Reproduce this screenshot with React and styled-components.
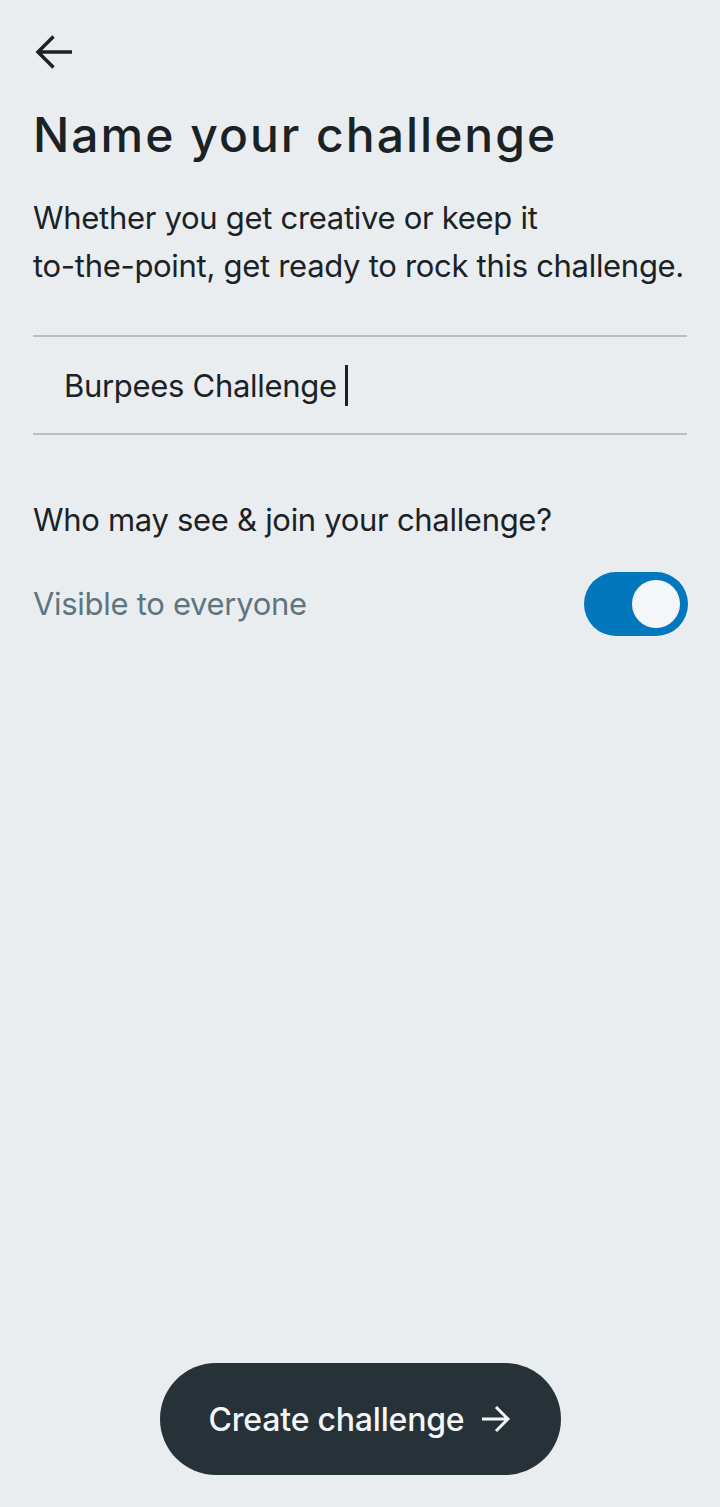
import React from "react";
import styled, { createGlobalStyle } from "styled-components";

const Global = createGlobalStyle`
  html, body { margin: 0; padding: 0; background: #e9edf0; }
  body { font-family: Inter, "Noto Sans", sans-serif; -webkit-font-smoothing: antialiased; }
  * { box-sizing: border-box; }
`;

const Page = styled.div`
  width: 720px;
  min-height: 1507px;
  display: flex;
  flex-direction: column;
  padding: 0 33px 32px 33px;
  background: #e9edf0;
  color: #1b2226;
`;

const BackButton = styled.button`
  display: flex;
  align-items: center;
  justify-content: center;
  width: 48px;
  height: 48px;
  margin: 28px 0 0 -2px;
  padding: 0;
  border: none;
  background: transparent;
  cursor: pointer;
`;

const Title = styled.h1`
  margin: 30px 0 0 0;
  font-size: 48px;
  line-height: 58px;
  font-weight: 500;
  letter-spacing: 2px;
`;

const Text = styled.p`
  margin: ${(p) => p.$mt || 0}px 0 0 0;
  font-size: 31px;
  line-height: 48px;
  font-weight: 400;
  letter-spacing: -0.3px;
  color: ${(p) => (p.$muted ? "#5e7580" : "#1b2226")};
`;

const InputRow = styled.div`
  margin-top: 45px;
  border-top: 2px solid #b3c0c7;
  border-bottom: 2px solid #b3c0c7;
  padding: 25px 0 23px 31px;
  font-size: 31px;
  line-height: 48px;
  letter-spacing: -0.3px;
  color: #1b2226;
`;

const Caret = styled.span`
  display: inline-block;
  width: 3px;
  height: 41px;
  margin-left: 8px;
  background: #1b2226;
  vertical-align: -9px;
`;

const ToggleRow = styled.div`
  margin-top: 28px;
  display: flex;
  align-items: center;
  justify-content: space-between;
`;

const Track = styled.div`
  width: 104px;
  height: 64px;
  border-radius: 32px;
  background: #0277bd;
  display: flex;
  align-items: center;
  justify-content: ${(p) => (p.$on ? "flex-end" : "flex-start")};
  padding: 0 8px;
  margin-right: -1px;
`;

const Thumb = styled.div`
  width: 48px;
  height: 48px;
  border-radius: 50%;
  background: #f4f7fa;
`;

const Footer = styled.div`
  margin-top: auto;
  display: flex;
  justify-content: center;
`;

const PrimaryButton = styled.button`
  width: 401px;
  height: 112px;
  border-radius: 56px;
  border: none;
  background: #263238;
  color: #f4f7fa;
  font-family: Inter, "Noto Sans", sans-serif;
  font-size: 32px;
  font-weight: 500;
  letter-spacing: -0.2px;
  display: flex;
  align-items: center;
  justify-content: center;
  gap: 17px;
  cursor: pointer;
`;

const ArrowLeft = () => (
  <svg width="40" height="40" viewBox="0 0 40 40" fill="none">
    <path d="M37 20H4M18.5 4.5L3 20L18.5 35.5" stroke="#1b2226" strokeWidth="3.5" strokeLinecap="butt" strokeLinejoin="miter" />
  </svg>
);

const ArrowRight = () => (
  <svg width="30" height="28" viewBox="0 0 30 28" fill="none">
    <path d="M1 14H27M15 2L27 14L15 26" stroke="#f4f7fa" strokeWidth="3" />
  </svg>
);

export default function App() {
  return (
    <>
      <Global />
      <Page>
        <BackButton aria-label="Back">
          <ArrowLeft />
        </BackButton>
        <Title>Name your challenge</Title>
        <Text $mt={30}>
          Whether you get creative or keep it
          <br />
          to-the-point, get ready to rock this challenge.
        </Text>
        <InputRow>
          Burpees Challenge
          <Caret />
        </InputRow>
        <Text $mt={61}>Who may see &amp; join your challenge?</Text>
        <ToggleRow>
          <Text $muted>Visible to everyone</Text>
          <Track $on>
            <Thumb />
          </Track>
        </ToggleRow>
        <Footer>
          <PrimaryButton>
            Create challenge
            <ArrowRight />
          </PrimaryButton>
        </Footer>
      </Page>
    </>
  );
}
